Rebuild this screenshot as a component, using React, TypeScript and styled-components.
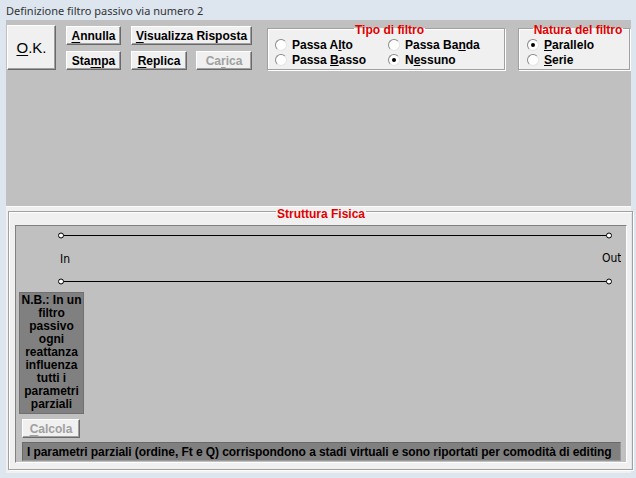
import styled, { createGlobalStyle } from "styled-components";

const FONT = `"Liberation Sans", Arial, sans-serif`;

const GlobalStyle = createGlobalStyle`
  html, body {
    margin: 0;
    padding: 0;
  }
  body {
    width: 636px;
    height: 478px;
    overflow: hidden;
    background: #dde6ef;
  }
`;

const Window = styled.div`
  width: 636px;
  height: 478px;
  display: flex;
  flex-direction: column;
  background: #dde6ef;
`;

const TitleBar = styled.div`
  height: 20px;
  flex: none;
  display: flex;
  align-items: center;
  padding-left: 6px;
  font: 11px "Noto Sans", "Open Sans", sans-serif;
  color: #333;
`;

const Client = styled.div`
  flex: 1;
  margin: 0 5px 5px 6px;
  background: #c0c0c0;
  display: flex;
  flex-direction: column;
`;

const TopArea = styled.div`
  flex: 1;
  display: flex;
  align-items: flex-start;
  padding: 1px 0 0 1px;
`;

const Btn = styled.button<{ $w: number; $ml?: number }>`
  width: ${(p) => p.$w}px;
  height: 19px;
  box-sizing: border-box;
  margin: 0 0 0 ${(p) => p.$ml ?? 0}px;
  padding: 0;
  display: flex;
  align-items: center;
  justify-content: center;
  font: bold 12px ${FONT};
  color: #000;
  background: #f0f0f0;
  border: 1px solid;
  border-color: #fff #696969 #696969 #fff;
  box-shadow: inset -1px -1px 0 #a0a0a0;

  &:disabled {
    color: #a0a0a0;
  }

  & u {
    text-decoration-thickness: 1px;
    text-underline-offset: 2px;
  }
`;

const OkButton = styled(Btn)`
  height: 45px;
  margin-top: 4px;
  font: 15px ${FONT};
`;

const ButtonGrid = styled.div`
  display: flex;
  flex-direction: column;
  gap: 6px;
  margin: 5px 0 0 10px;
`;

const BtnRow = styled.div`
  display: flex;
  gap: 10px;
`;

const Group = styled.fieldset<{ $w: number; $ml: number; $pl: number }>`
  width: ${(p) => p.$w}px;
  box-sizing: border-box;
  margin: -2px 0 0 ${(p) => p.$ml}px;
  padding: 0 0 2px ${(p) => p.$pl}px;
  background: #f0f0f0;
  border: 1px solid #a0a0a0;
  box-shadow: inset 1px 1px 0 #fff, 1px 1px 0 #fff;
`;

const Legend = styled.legend<{ $top: number }>`
  margin: 0 auto;
  padding: ${(p) => p.$top}px 1px 0;
  font: bold 12px/14px ${FONT};
  color: #e00000;
`;

const RadioGrid = styled.div<{ $cols: string }>`
  display: grid;
  grid-template-columns: ${(p) => p.$cols};
`;

const RadioItem = styled.label`
  display: flex;
  align-items: center;
  gap: 5px;
  height: 15px;
  font: bold 12px ${FONT};
  color: #000;
  white-space: nowrap;
`;

const RadioDot = styled.span<{ $on?: boolean }>`
  width: 12px;
  height: 12px;
  box-sizing: border-box;
  border-radius: 50%;
  border: 1px solid;
  border-color: #8a8a8a #e4e4e4 #e4e4e4 #8a8a8a;
  background: #fff;
  display: flex;
  align-items: center;
  justify-content: center;

  &::after {
    content: "";
    width: 4px;
    height: 4px;
    border-radius: 50%;
    background: ${(p) => (p.$on ? "#000" : "transparent")};
  }
`;

const LowerPanel = styled.div`
  flex: none;
  display: flex;
  flex-direction: column;
  background: #f0f0f0;
  border-top: 1px solid #fbfbfb;
  padding: 0 2px 3px 2px;
`;

const Frame = styled.fieldset`
  margin: -6px 0 0 0;
  padding: 4px 5px 6px 6px;
  border: 1px solid #a0a0a0;
  box-shadow: inset 1px 1px 0 #fff, 1px 1px 0 #fff;
  display: flex;
  flex-direction: column;
`;

const Panel = styled.div`
  display: flex;
  flex-direction: column;
  align-items: flex-start;
  background: #c0c0c0;
  border: 1px solid #808080;
  border-right-color: #fff;
  border-bottom-color: #fff;
  padding: 0 5px 1px 0;
`;

const Schematic = styled.svg`
  display: block;
  width: 605px;
  height: 66px;

  & text {
    font: 12px "Liberation Sans Narrow", "DejaVu Sans Condensed", sans-serif;
  }
`;

const Note = styled.div`
  width: 65px;
  height: 122px;
  box-sizing: border-box;
  margin-left: 3px;
  padding-top: 1px;
  background: #808080;
  border: 1px solid #707070;
  font: bold 12px/13px ${FONT};
  color: #000;
  text-align: center;
`;

const CalcButton = styled(Btn)`
  margin: 5px 0 0 6px;
`;

const InfoBar = styled.div`
  align-self: stretch;
  height: 19px;
  box-sizing: border-box;
  margin: 4px 0 0 6px;
  padding-left: 4px;
  display: flex;
  align-items: center;
  background: #808080;
  border: 1px solid;
  border-color: #6a6a6a #999 #999 #6a6a6a;
  font: bold 12px ${FONT};
  letter-spacing: -0.075px;
  color: #000;
  white-space: nowrap;
  overflow: hidden;
`;

const Radio = ({ on, children }: { on?: boolean; children: React.ReactNode }) => (
  <RadioItem>
    <RadioDot $on={on} />
    <span>{children}</span>
  </RadioItem>
);

const App = () => {
  return (
    <Window>
      <GlobalStyle />
      <TitleBar>Definizione filtro passivo via numero 2</TitleBar>
      <Client>
        <TopArea>
          <OkButton $w={49}>
            <span>
              <u>O</u>.K.
            </span>
          </OkButton>
          <ButtonGrid>
            <BtnRow>
              <Btn $w={55}>
                <span>
                  <u>A</u>nnulla
                </span>
              </Btn>
              <Btn $w={121}>
                <span>
                  <u>V</u>isualizza Risposta
                </span>
              </Btn>
            </BtnRow>
            <BtnRow>
              <Btn $w={55}>
                <span>
                  Sta<u>m</u>pa
                </span>
              </Btn>
              <Btn $w={56}>
                <span>
                  <u>R</u>eplica
                </span>
              </Btn>
              <Btn $w={56} $ml={-1} disabled>
                <span>
                  Ca<u>r</u>ica
                </span>
              </Btn>
            </BtnRow>
          </ButtonGrid>
          <Group $w={238} $ml={15} $pl={7}>
            <Legend $top={4}>Tipo di filtro</Legend>
            <RadioGrid $cols="113px auto">
              <Radio>
                Passa A<u>l</u>to
              </Radio>
              <Radio>
                Passa Ba<u>n</u>da
              </Radio>
              <Radio>
                Passa <u>B</u>asso
              </Radio>
              <Radio on>
                N<u>e</u>ssuno
              </Radio>
            </RadioGrid>
          </Group>
          <Group $w={112} $ml={13} $pl={8}>
            <Legend $top={4}>Natura del filtro</Legend>
            <RadioGrid $cols="auto">
              <Radio on>
                <u>P</u>arallelo
              </Radio>
              <Radio>
                <u>S</u>erie
              </Radio>
            </RadioGrid>
          </Group>
        </TopArea>
        <LowerPanel>
          <Frame>
            <Legend $top={6}>Struttura Fisica</Legend>
            <Panel>
              <Schematic viewBox="0 0 605 66">
                <line x1={45} y1={9.5} x2={593} y2={9.5} stroke="#000" strokeWidth={1} />
                <line x1={45} y1={55.5} x2={593} y2={55.5} stroke="#000" strokeWidth={1} />
                <circle cx={45} cy={9.5} r={2.5} fill="#fff" stroke="#000" strokeWidth={1} />
                <circle cx={593} cy={9.5} r={2.5} fill="#fff" stroke="#000" strokeWidth={1} />
                <circle cx={45} cy={55.5} r={2.5} fill="#fff" stroke="#000" strokeWidth={1} />
                <circle cx={593} cy={55.5} r={2.5} fill="#fff" stroke="#000" strokeWidth={1} />
                <text x={44} y={36.5}>
                  In
                </text>
                <text x={586} y={35.5}>
                  Out
                </text>
              </Schematic>
              <Note>
                N.B.: In un
                <br />
                filtro
                <br />
                passivo
                <br />
                ogni
                <br />
                reattanza
                <br />
                influenza
                <br />
                tutti i
                <br />
                parametri
                <br />
                parziali
              </Note>
              <CalcButton $w={58} disabled>
                <span>
                  <u>C</u>alcola
                </span>
              </CalcButton>
              <InfoBar>
                I parametri parziali (ordine, Ft e Q) corrispondono a stadi virtuali e sono riportati per comodità di editing
              </InfoBar>
            </Panel>
          </Frame>
        </LowerPanel>
      </Client>
    </Window>
  );
};

export default App;
